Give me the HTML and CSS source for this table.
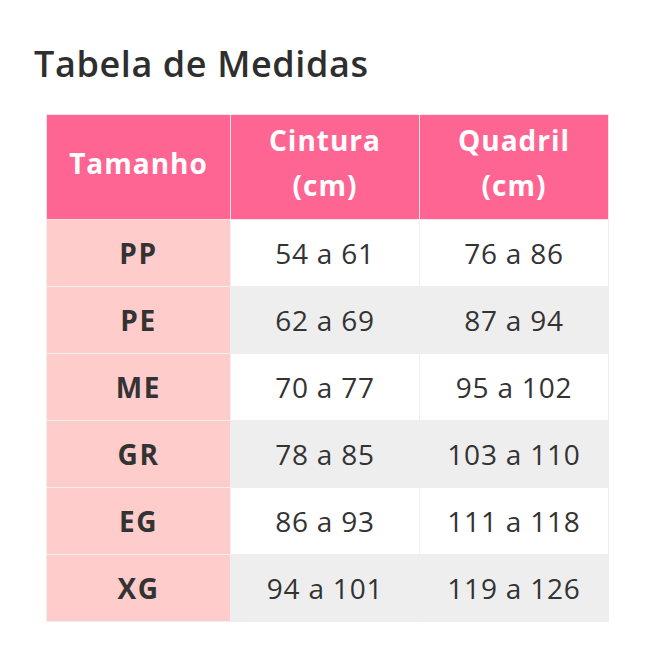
FILE: index.html
```html
<!DOCTYPE html>
<html lang="pt">
<head>
<meta charset="utf-8">
<title>Tabela de Medidas</title>
<link rel="stylesheet" href="styles.css">
</head>
<body>
<div class="page">
  <h2 class="title">Tabela de Medidas</h2>
  <table class="sizes">
    <thead>
      <tr>
        <th class="c1">Tamanho</th>
        <th class="c2">Cintura<br>(cm)</th>
        <th class="c3">Quadril<br>(cm)</th>
      </tr>
    </thead>
    <tbody>
      <tr><td class="size">PP</td><td>54 a 61</td><td>76 a 86</td></tr>
      <tr class="alt"><td class="size">PE</td><td>62 a 69</td><td>87 a 94</td></tr>
      <tr><td class="size">ME</td><td>70 a 77</td><td>95 a 102</td></tr>
      <tr class="alt"><td class="size">GR</td><td>78 a 85</td><td>103 a 110</td></tr>
      <tr><td class="size">EG</td><td>86 a 93</td><td>111 a 118</td></tr>
      <tr class="alt"><td class="size">XG</td><td>94 a 101</td><td>119 a 126</td></tr>
    </tbody>
  </table>
</div>
</body>
</html>
```
FILE: styles.css
```css
html, body {
  margin: 0;
  padding: 0;
  background: #ffffff;
}
.page {
  padding: 40px 0 0 34px;
  font-family: "Open Sans", "Liberation Sans", sans-serif;
  color: #333333;
}
.title {
  margin: 0 0 26px 0;
  font-size: 36px;
  font-weight: 600;
  line-height: 48px;
  letter-spacing: 0.6px;
  color: #2e2e2e;
}
.sizes {
  margin-left: 12px;
  border-collapse: collapse;
  width: 561px;
  table-layout: fixed;
}
.sizes th, .sizes td {
  border: 1px solid #f0eeee;
  text-align: center;
  padding: 0;
}
.sizes th {
  background: #ff6593;
  color: #ffffff;
  font-weight: 700;
  font-size: 28px;
  line-height: 45px;
  letter-spacing: 1px;
  height: 96px;
  padding-bottom: 8px;
  border-color: #fde2ea;
}
.c1 { width: 183px; }
.c2 { width: 188px; }
.c3 { width: 188px; }
.sizes td {
  height: 66px;
  font-size: 28px;
  font-weight: 400;
  letter-spacing: 0.8px;
  background: #ffffff;
}
.sizes tr.alt td {
  background: #eeeeee;
}
.sizes td.size, .sizes tr.alt td.size {
  background: #ffcccc;
  font-weight: 700;
  letter-spacing: 1.6px;
  color: #333333;
}
```
